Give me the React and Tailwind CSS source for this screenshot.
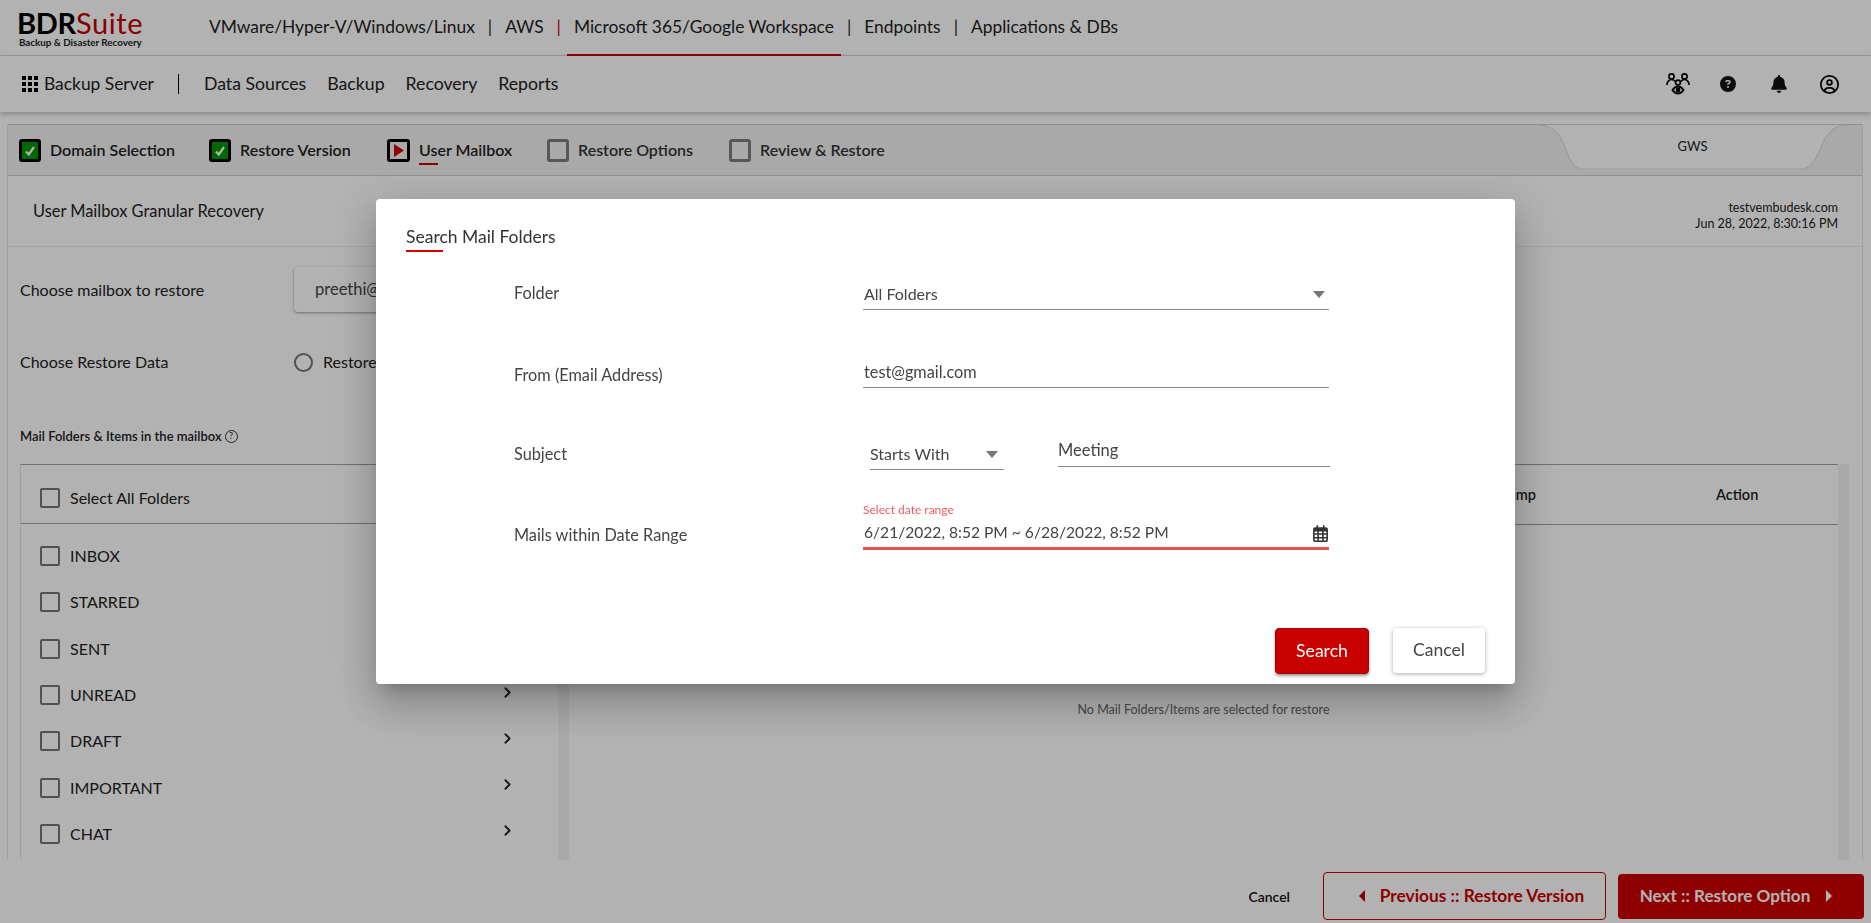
import React from 'react'
import { ChevronRight } from 'lucide-react'
import { FaCircleQuestion, FaRegCircleUser, FaRegCalendarDays, FaBell } from 'react-icons/fa6'

const topLinks = [
    { label: 'VMware/Hyper-V/Windows/Linux' },
    { label: 'AWS' },
    { label: 'Microsoft 365/Google Workspace', active: true },
    { label: 'Endpoints' },
    { label: 'Applications & DBs' },
]

const steps = [
    { label: 'Domain Selection', state: 'done', w: 'w-[190px]' },
    { label: 'Restore Version', state: 'done', w: 'w-[178px]' },
    { label: 'User Mailbox', state: 'current', w: 'w-[160px]' },
    { label: 'Restore Options', state: 'todo', w: 'w-[182px]' },
    { label: 'Review & Restore', state: 'todo', w: 'w-[170px]' },
]

const folders = [
    { name: 'INBOX' },
    { name: 'STARRED' },
    { name: 'SENT' },
    { name: 'UNREAD', more: true },
    { name: 'DRAFT', more: true },
    { name: 'IMPORTANT', more: true },
    { name: 'CHAT', more: true },
]

function GridIcon() {
    const cells = [0, 6, 12]
    return (
        <svg width="16" height="16" viewBox="0 0 16 16" fill="#000">
            {cells.map((y) => cells.map((x) => <rect key={`${x}-${y}`} x={x} y={y} width="4" height="4" />))}
        </svg>
    )
}

function PeopleIcon() {
    return (
        <svg width="24" height="22" viewBox="0 0 24 22" fill="none" stroke="#000" strokeWidth="1.6">
            <circle cx="5.500" cy="3.500" r="2.600" />
            <circle cx="18.500" cy="3.500" r="2.600" />
            <circle cx="12" cy="9.500" r="2.400" />
            <path d="M1 12c0-3 2-5.500 4.500-5.500 1.500 0 3 .8 3.700 2.200M23 12c0-3-2-5.500-4.500-5.500-1.500 0-3 .8-3.700 2.200" />
            <path d="M6.500 17c1.500-2.300 3.300-3.500 5.500-3.500s4 1.200 5.500 3.500c-1.500 2.300-3.300 3.500-5.500 3.500s-4-1.200-5.500-3.500z" strokeWidth="1.800" />
            <circle cx="12" cy="17" r="1.600" fill="#000" />
        </svg>
    )
}

function StepBox({ state }) {
    if (state === 'done') {
        return (
            <span className="flex h-[23px] w-[22px] items-center justify-center rounded-[3px] border-[3px] border-black bg-[#009600]">
                <svg width="12" height="12" viewBox="0 0 12 12" fill="none" stroke="#fff" strokeWidth="2.200"><path d="M2 6.500l2.800 3L10 2" /></svg>
            </span>
        )
    }
    if (state === 'current') {
        return (
            <span className="flex h-[23px] w-[23px] items-center justify-center rounded-[3px] border-[3px] border-black">
                <svg width="11" height="13" viewBox="0 0 11 13" fill="#d40000"><path d="M1 0l10 6.500L1 13z" /></svg>
            </span>
        )
    }
    return <span className="h-[23px] w-[22px] rounded-[3px] border-[3px] border-[#7d7d7d]" />
}

function Box() {
    return <span className="h-5 w-5 shrink-0 rounded-[2px] border-2 border-[#757575]" />
}

function Caret() {
    return <span className="h-0 w-0 border-x-[6px] border-t-[7px] border-x-transparent border-t-[#757575]" />
}

function SearchModal() {
    return (
        <div className="fixed inset-0 flex justify-center bg-black/30 pl-[20px] pt-[199px]">
            <div className="flex h-[485px] w-[1139px] flex-col rounded bg-white px-[30px] shadow-[0_11px_15px_-7px_rgba(0,0,0,.2),0_24px_38px_3px_rgba(0,0,0,.14),0_9px_46px_8px_rgba(0,0,0,.12)]">
                <div className="pt-[27px]">
                    <h2 className="text-[17.5px] leading-[22px] text-[#333]">Search Mail Folders</h2>
                    <div className="mt-[2px] h-[2px] w-[37px] bg-[#d40000]" />
                </div>

                <div className="ml-[108px] mt-[18px] text-[16.300px] text-[#444]">
                    <div className="flex h-[40px] items-start">
                        <span className="w-[349px] pt-[12px] leading-[22px]">Folder</span>
                        <div className="flex h-[40px] w-[466px] items-center justify-between border-b border-[#8a8a8a] pl-px pr-[4px] pt-[9px] text-[16px]">
                            <span>All Folders</span>
                            <Caret />
                        </div>
                    </div>

                    <div className="mt-[38px] flex h-[40px] items-start">
                        <span className="w-[349px] pt-[16px] leading-[22px]">From (Email Address)</span>
                        <div className="flex h-[40px] w-[466px] items-center border-b border-[#8a8a8a] pl-px pt-[9px]">test@gmail.com</div>
                    </div>

                    <div className="mt-[41px] flex h-[41px] items-start">
                        <span className="w-[349px] pt-[14px] leading-[22px]">Subject</span>
                        <div className="ml-[7px] flex h-[41px] w-[134px] items-center justify-between border-b border-[#8a8a8a] pr-[6px] pt-[10px] text-[16px]">
                            <span>Starts With</span>
                            <Caret />
                        </div>
                        <div className="ml-[54px] flex h-[38px] w-[272px] items-center border-b border-[#8a8a8a] pt-[5px] text-[16.500px]">Meeting</div>
                    </div>

                    <div className="mt-[33px] flex items-start">
                        <span className="w-[349px] pt-[21px] leading-[22px]">Mails within Date Range</span>
                        <div className="w-[466px]">
                            <div className="text-[12px] leading-[14px] text-[#f25c5c]">Select date range</div>
                            <div className="flex h-[33px] items-center justify-between border-b-[3px] border-[#e8514e] pl-px pt-[2px] text-[15.600px]">
                                <span>6/21/2022, 8:52 PM ~ 6/28/2022, 8:52 PM</span>
                                <FaRegCalendarDays className="text-[17px] text-[#333]" />
                            </div>
                        </div>
                    </div>
                </div>

                <div className="mt-[78px] flex justify-end gap-[24px] text-[17.600px]">
                    <button className="h-[46px] w-[94px] rounded border border-[#a80000] bg-[#c80000] text-white shadow-[0_2px_3px_rgba(0,0,0,.4)]">Search</button>
                    <button className="h-[45px] w-[92px] rounded bg-white text-[#444] shadow-[0_1px_4px_rgba(0,0,0,.35)]">Cancel</button>
                </div>
            </div>
        </div>
    )
}

export default function App() {
    return (
        <div className="flex h-[923px] flex-col overflow-hidden bg-white font-['Lato','Liberation_Sans',sans-serif] text-[#222]">
            <header className="flex h-[56px] shrink-0 border-b border-[#dcdcdc]">
                <div className="ml-[17px] w-[192px] pt-[9px]">
                    <div className="text-[29px] font-bold leading-[28px] tracking-[-0.3px] text-black">
                        BDR<span className="font-normal tracking-[0.6px] text-[#c40000]">Suite</span>
                    </div>
                    <div className="ml-[2px] text-[9.800px] font-bold leading-[11px]">Backup &amp; Disaster Recovery</div>
                </div>
                <nav className="flex text-[17.400px]">
                    {topLinks.map((link, i) => (
                        <React.Fragment key={link.label}>
                            {i > 0 && <span className={`flex items-center px-[13px] ${link.active ? 'text-[#cc0000]' : ''}`}>|</span>}
                            <a className={`-mx-[7px] flex h-[56px] items-center px-[7px] pb-[1px] ${link.active ? 'border-b-2 border-[#cc0000] pt-[2px]' : ''}`}>{link.label}</a>
                        </React.Fragment>
                    ))}
                </nav>
            </header>

            <div className="flex h-[56px] shrink-0 items-center pl-[22px] text-[17.400px] shadow-[0_2px_5px_rgba(0,0,0,.25)]">
                <GridIcon />
                <span className="ml-[6px]">Backup Server</span>
                <span className="ml-[24px] h-[20px] w-px bg-black" />
                <nav className="ml-[25px] flex gap-[21px] text-[17.700px]">
                    <a>Data Sources</a>
                    <a>Backup</a>
                    <a>Recovery</a>
                    <a>Reports</a>
                </nav>
                <div className="ml-auto mr-[32px] flex items-center text-black">
                    <PeopleIcon />
                    <FaCircleQuestion className="ml-[30px] text-[16px] text-[#111]" />
                    <FaBell className="ml-[34px] text-[18px] text-[#111]" />
                    <FaRegCircleUser className="ml-[32px] text-[19px]" />
                </div>
            </div>

            <main className="ml-[7px] mr-[8px] mt-[12px] flex h-[736px] min-h-0 shrink-0 flex-col border-x border-[#e6e6e6]">
                <div className="flex h-[52px] shrink-0 items-start border-y border-[#d0d0d0] bg-[#f3f3f3] pl-[11px] pt-[14px] text-[16px] font-semibold">
                    {steps.map((s) => (
                        <div key={s.label} className={`flex items-center gap-[9px] ${s.w}`}>
                            <StepBox state={s.state} />
                            <span className={`relative -mt-px ${s.state === 'todo' ? 'text-[#333]' : ''}`}>
                                {s.label}
                                {s.state === 'current' && <span className="absolute -bottom-[3px] left-0 h-[2px] w-[19px] bg-[#c40000]" />}
                            </span>
                        </div>
                    ))}
                    <div className="relative -mt-[14px] ml-auto mr-[15px] flex h-[44px] w-[309px] items-center justify-center text-[13px] font-normal">
                        <svg className="absolute inset-0" width="309" height="44" viewBox="0 0 309 44" fill="none">
                            <path d="M0 0C14 0 22 8 27 22 32 37 36 44 46 44H262C272 44 277 37 283 22 289 8 295 0 309 0" fill="#fff" stroke="#d8d8d8" />
                        </svg>
                        <span className="relative">GWS</span>
                    </div>
                </div>

                <div className="flex h-[71px] shrink-0 items-start justify-between border-b border-[#eeeeee] pl-[25px] pr-[24px]">
                    <span className="pt-[24px] text-[16.400px] leading-[22px]">User Mailbox Granular Recovery</span>
                    <div className="pt-[24px] text-right text-[12.500px] leading-[16px]">
                        <div>testvembudesk.com</div>
                        <div>Jun 28, 2022, 8:30:16 PM</div>
                    </div>
                </div>

                <div className="mt-[20px] flex h-[45px] shrink-0 items-center pl-[12px] text-[16px]">
                    <span className="w-[274px]">Choose mailbox to restore</span>
                    <div className="flex h-[45px] w-[400px] items-center rounded bg-white pl-[21px] text-[16.500px] text-[#444] shadow-[0_1px_3px_rgba(0,0,0,.4)]">preethi@</div>
                </div>
                <div className="mt-[38px] flex h-[24px] shrink-0 items-center pl-[12px] text-[16px]">
                    <span className="w-[274px]">Choose Restore Data</span>
                    <span className="h-[19px] w-[19px] rounded-full border-2 border-[#757575]" />
                    <span className="ml-[10px]">Restore</span>
                </div>
                <div className="mt-[53px] flex shrink-0 items-center gap-[3px] pl-[12px] text-[13px] font-semibold leading-[18px]">
                    <span>Mail Folders &amp; Items in the mailbox</span>
                    <span className="flex h-[13px] w-[13px] items-center justify-center rounded-full border border-[#333] text-[9px] font-normal">?</span>
                </div>

                <div className="ml-[12px] mt-[19px] flex min-h-0 flex-1 overflow-hidden">
                    <aside className="flex w-[538px] shrink-0 flex-col overflow-hidden border-l border-t border-l-[#e6e6e6] border-t-[#a0a0a0]">
                        <div className="flex h-[59px] shrink-0 items-center gap-[10px] border-b border-[#a0a0a0] pl-[19px] pt-[7px] text-[16px]">
                            <Box />
                            <span>Select All Folders</span>
                        </div>
                        <ul className="pt-[9px]">
                            {folders.map((f) => (
                                <li key={f.name} className="flex h-[46.300px] items-center pl-[19px] pr-[42px] text-[16px]">
                                    <Box />
                                    <span className="ml-[10px]">{f.name}</span>
                                    {f.more && <ChevronRight size={17} strokeWidth={2.500} className="-mt-[6px] ml-auto" />}
                                </li>
                            ))}
                        </ul>
                    </aside>
                    <div className="w-[11px] shrink-0 border-t border-[#a0a0a0] bg-[#f3f3f3]" />
                    <section className="flex min-w-0 flex-1 flex-col border-t border-[#a0a0a0]">
                        <div className="flex h-[60px] shrink-0 items-center border-b border-[#a0a0a0] text-[14.500px] font-semibold">
                            <span className="w-[967px] text-right">Timestamp</span>
                            <span className="ml-[180px]">Action</span>
                        </div>
                        <p className="pt-[176px] text-center text-[12.500px] text-[#666]">No Mail Folders/Items are selected for restore</p>
                    </section>
                    <div className="w-[11px] shrink-0 bg-[#f3f3f3]" />
                    <div className="w-[13px] shrink-0 bg-white" />
                </div>
            </main>

            <footer className="flex flex-1 items-center justify-end pr-[7px] pt-[9px]">
                <a className="text-[14px] font-semibold text-[#111]">Cancel</a>
                <button className="ml-[33px] flex h-[48px] w-[283px] items-center justify-center gap-[15px] rounded border border-[#cc0000] pl-[14px] text-[17.300px] font-bold text-[#cc0000]">
                    <span className="h-0 w-0 border-y-[6px] border-r-[6px] border-y-transparent border-r-[#cc0000]" />
                    Previous :: Restore Version
                </button>
                <button className="ml-[12px] flex h-[45px] w-[246px] items-center justify-center gap-[16px] rounded bg-[#cc0000] pr-[10px] text-[17.100px] font-bold text-white">
                    Next :: Restore Option
                    <span className="h-0 w-0 border-y-[6px] border-l-[6px] border-y-transparent border-l-white" />
                </button>
            </footer>

            <SearchModal />
        </div>
    )
}
